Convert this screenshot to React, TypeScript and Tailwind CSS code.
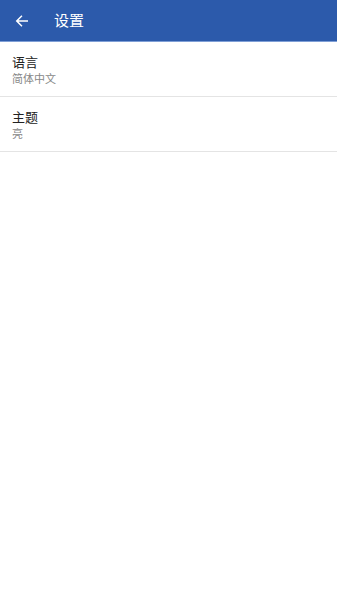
import React from "react";

const font = { fontFamily: '"Noto Sans CJK SC", "Noto Sans", sans-serif' };

function Row({ title, sub }: { title: string; sub: string }) {
  return (
    <div className="flex h-[55px] flex-col justify-center gap-[3px] border-b border-[#e4e4e4] px-3">
      <div className="text-[13px] leading-[14px] text-[#222]">{title}</div>
      <div className="text-[11px] leading-[12px] text-[#888]">{sub}</div>
    </div>
  );
}

export default function App() {
  return (
    <div className="min-h-[600px] w-full bg-white" style={font}>
      <div className="flex h-[42px] items-center border-b border-[#7f9fd6] bg-[#2c5aab]">
        <div className="flex w-[42px] items-center justify-center pl-[1px]">
          <svg width="14" height="14" viewBox="0 0 24 24" fill="none" stroke="white" strokeWidth="2.6" strokeLinecap="square">
            <path d="M21 12H4M11 4l-8 8 8 8" />
          </svg>
        </div>
        <div className="pl-[12px] text-[15px] text-white">设置</div>
      </div>
      <Row title="语言" sub="简体中文" />
      <Row title="主题" sub="亮" />
    </div>
  );
}
